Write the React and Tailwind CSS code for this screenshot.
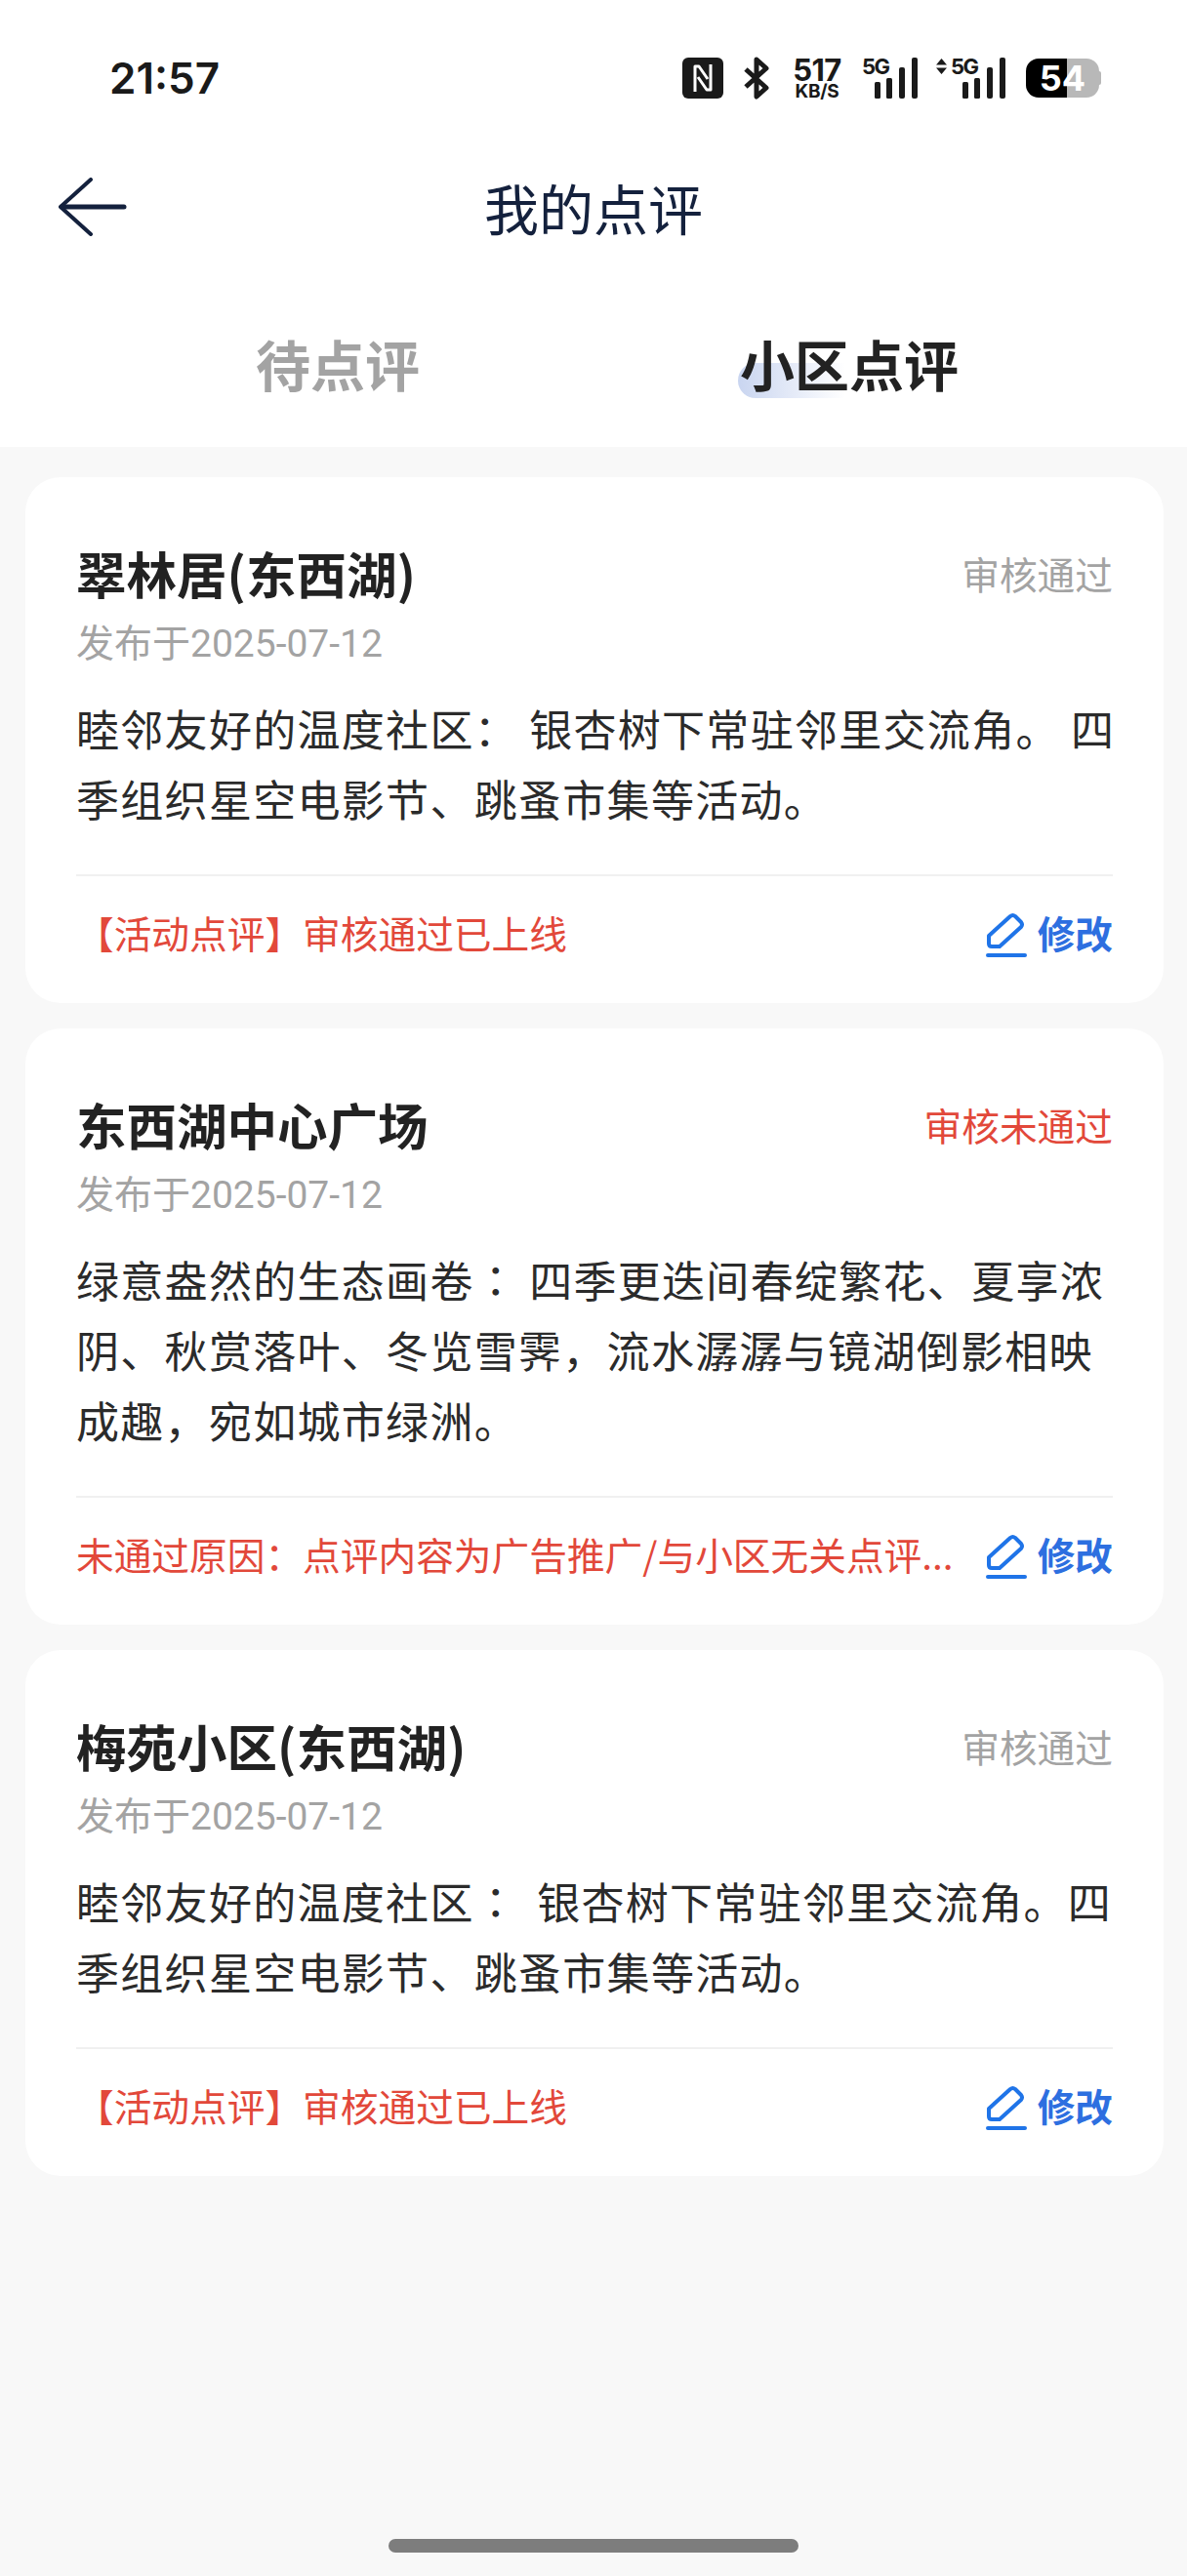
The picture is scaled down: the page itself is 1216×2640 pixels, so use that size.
const reviews = [
  {
    name: "翠林居(东西湖)",
    status: "审核通过",
    rejected: false,
    lead: "睦邻友好的温度社区",
    colon: "plain",
    body: " 银杏树下常驻邻里交流角。 四季组织星空电影节、跳蚤市集等活动。",
    note: "【活动点评】审核通过已上线",
  },
  {
    name: "东西湖中心广场",
    status: "审核未通过",
    rejected: true,
    lead: "绿意盎然的生态画卷",
    colon: "centered",
    body: " 四季更迭间春绽繁花、夏享浓阴、秋赏落叶、冬览雪霁，流水潺潺与镜湖倒影相映成趣，宛如城市绿洲。",
    note: "未通过原因：点评内容为广告推广/与小区无关点评...",
  },
  {
    name: "梅苑小区(东西湖)",
    status: "审核通过",
    rejected: false,
    lead: "睦邻友好的温度社区",
    colon: "wide",
    body: " 银杏树下常驻邻里交流角。四季组织星空电影节、跳蚤市集等活动。",
    note: "【活动点评】审核通过已上线",
  },
];

const Signal = () => (
  <svg width="44" height="42" viewBox="0 0 44 42" fill="#1a1a1a">
    <rect x="0" y="25" width="6" height="17" rx="1.5" />
    <rect x="12" y="21" width="6" height="21" rx="1.5" />
    <rect x="25" y="10" width="6" height="32" rx="2" />
    <rect x="38" y="0" width="6" height="42" rx="2" />
  </svg>
);

const StatusBar = () => (
  <div className="h-[158px] flex items-center justify-between pl-[112px] pr-[90px] pt-[2px] font-['Inter','Roboto',sans-serif]">
    <span className="text-[44px] font-semibold leading-none text-[#1a1a1a]">21:57</span>
    <div className="flex items-center h-[44px]">
      {/* NFC */}
      <svg width="42" height="42" viewBox="0 0 42 42" className="mr-[21px]">
        <rect width="42" height="42" rx="6" fill="#1a1a1a" />
        <path d="M13 35V9h4l9 13M29 7v26h-4l-9-13" fill="none" stroke="#fff" strokeWidth="3" strokeLinejoin="round" />
      </svg>
      {/* bluetooth */}
      <svg width="26" height="44" viewBox="0 0 26 44" fill="none" stroke="#1a1a1a" strokeWidth="5" className="mr-[23px]">
        <path d="M2 13l21 19-10 9V3l10 9L2 31" strokeLinejoin="round" />
      </svg>
      <div className="w-[52px] mr-[20px] flex flex-col items-center font-bold text-[#1a1a1a] leading-none">
        <span className="text-[31px] leading-[27px] tracking-[-0.5px]">517</span>
        <span className="text-[19px] leading-[17px] tracking-[-0.3px]">KB/S</span>
      </div>
      <div className="relative w-[57px] h-[42px] mr-[19px] flex justify-end">
        <span className="absolute left-0 top-0 text-[22px] leading-[18px] font-bold text-[#1a1a1a] tracking-[-1.5px]">5G</span>
        <Signal />
      </div>
      <div className="relative w-[71px] h-[42px] mr-[21px] flex justify-end">
        <svg width="11" height="16" viewBox="0 0 11 16" fill="#1a1a1a" className="absolute left-0 top-[1px]">
          <path d="M5.5 0L11 6.5H0zM5.5 16L0 9.5h11z" />
        </svg>
        <span className="absolute left-[15px] top-0 text-[22px] leading-[18px] font-bold text-[#1a1a1a] tracking-[-1.5px]">5G</span>
        <Signal />
      </div>
      <div className="relative w-[75px] h-[40px] flex items-center justify-center rounded-[13px] bg-[linear-gradient(90deg,#000_0,#000_42px,#b8b8b8_42px,#b8b8b8_100%)] text-white text-[36px] font-bold leading-none">
        54
        <span className="absolute right-[-2px] top-[13px] w-[2px] h-[14px] rounded-r-full bg-[#b8b8b8]" />
      </div>
    </div>
  </div>
);

const NavBar = () => (
  <div className="h-[108px] flex items-center justify-between pl-[60px] pr-[60px]">
    <svg width="70" height="60" viewBox="0 0 70 60" fill="none" stroke="#14213d" strokeLinecap="round" strokeLinejoin="round">
      <path d="M33 2L2 30l31 28" strokeWidth="4" />
      <path d="M3 30h64" strokeWidth="5" />
    </svg>
    <h1 className="text-[56px] leading-none text-[#14213d]">我的点评</h1>
    <div className="w-[70px]" />
  </div>
);

const Tabs = () => (
  <div className="h-[192px] pt-[20px] grid grid-cols-2 px-[84px] items-center text-[56px] leading-none font-bold">
    <div className="text-center text-[#a3a3a3]">待点评</div>
    <div className="text-center text-[#222222]">
      <span className="relative inline-block">
        <span className="absolute left-[-2px] bottom-[-8px] h-[36px] w-[110px] rounded-l-full bg-[linear-gradient(90deg,#c9d5f0,#ffffff)]" />
        <span className="relative">小区点评</span>
      </span>
    </div>
  </div>
);

const EditIcon = () => (
  <svg width="42" height="46" viewBox="0 0 42 46" fill="none" stroke="#1f74e8" className="mr-[11px] mt-[6px]">
    <path d="M3 24L25 4q2.500-2 5 0l6 6q2 2.500 0 5L14 35H6q-3 0-3-3z" strokeWidth="4" strokeLinejoin="round" />
    <path d="M2 44h38" strokeWidth="4" strokeLinecap="round" />
  </svg>
);

const Colon = ({ kind }) => {
  if (kind === "plain") return <span>：</span>;
  return (
    <span lang="zh-TW" className={`font-['Noto_Sans_CJK_TC',sans-serif] ${kind === "wide" ? "mr-[8px]" : ""}`}>：</span>
  );
};

const ReviewCard = ({ review }) => (
  <div className="bg-white rounded-[36px] px-[52px] pt-[62px] pb-[42px]">
    <div className="flex items-center justify-between h-[72px]">
      <h2 className="text-[51.5px] font-bold leading-[72px] text-[#222222]">{review.name}</h2>
      <span className={`text-[38.7px] leading-[56px] ${review.rejected ? "text-[#e2483a]" : "text-[#a3a3a3]"}`}>{review.status}</span>
    </div>
    <p className="mt-[9px] text-[39px] leading-[56px] text-[#a3a3a3] font-['Roboto','Noto_Sans_CJK_SC',sans-serif]">发布于2025-07-12</p>
    <p className="mt-[22px] -mr-[6px] text-[44px] leading-[72px] tracking-[1.3px] text-[#2b2b2b] whitespace-pre-wrap">
      {review.lead}
      <Colon kind={review.colon} />
      {review.body}
    </p>
    <div className="mt-[42px] border-t-2 border-[#f0f0f0] pt-[26px] flex items-center justify-between h-[90px]">
      <span className="whitespace-nowrap text-[38.7px] leading-[56px] text-[#e2483a]">{review.note}</span>
      <span className="flex items-center text-[38.7px] leading-[56px] font-bold text-[#2d6fe0]">
        <EditIcon />
        修改
      </span>
    </div>
  </div>
);

export default function App() {
  return (
    <div lang="zh-CN" className="w-[1216px] h-[2640px] bg-[#f8f8f8] flex flex-col font-['Noto_Sans_CJK_SC',sans-serif]">
      <div className="bg-white h-[458px]">
        <StatusBar />
        <NavBar />
        <Tabs />
      </div>
      <div className="flex flex-col gap-[26px] pl-[26px] pr-[24px] pt-[31px]">
        {reviews.map((review) => (
          <ReviewCard key={review.name} review={review} />
        ))}
      </div>
      <div className="mt-auto mb-[24px] mx-auto w-[420px] h-[14px] rounded-full bg-[#7d7d7d]" />
    </div>
  );
}
